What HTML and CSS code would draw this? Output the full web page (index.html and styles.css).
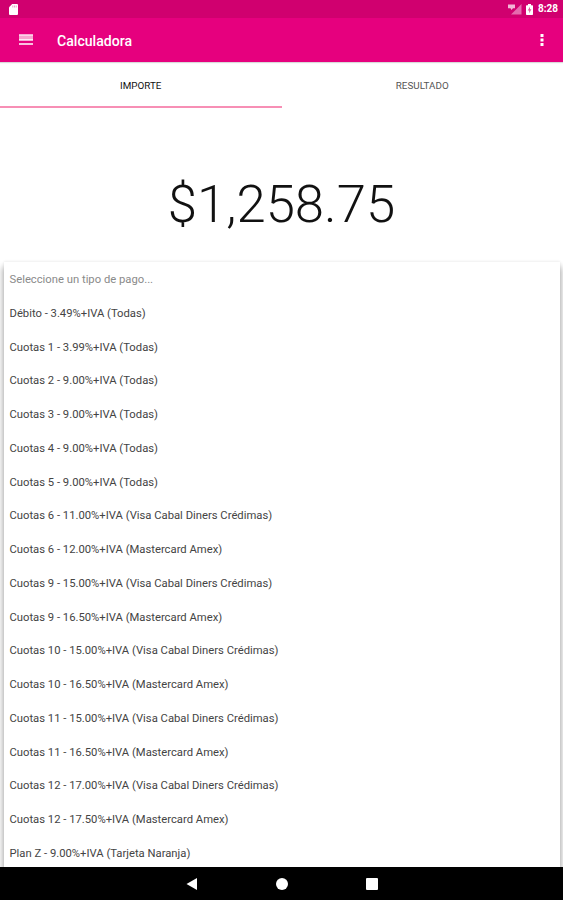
FILE: index.html
```
<!DOCTYPE html>
<html lang="es">
<head>
  <meta charset="UTF-8">
  <meta name="viewport" content="width=device-width, initial-scale=1">
  <title>Calculadora</title>
  <link rel="stylesheet" href="styles.css">
</head>
<body>

<div class="status-bar">
  <svg class="sd-icon" width="9" height="11" viewBox="0 0 9 11">
    <path fill="#fff" d="M3.2 0H8a1 1 0 0 1 1 1v9a1 1 0 0 1-1 1H1a1 1 0 0 1-1-1V3.2z"/>
    <path stroke="#e58abb" stroke-width=".8" d="M3.8 1.5v2M5.5 1.5v2M7.2 1.5v2"/>
  </svg>
  <div class="status-right">
    <svg class="signal-icon" width="14" height="11" viewBox="0 0 14 11">
      <path fill="#e56aae" d="M13.5 0v10.5H3z"/>
      <path fill="#f3b5d6" d="M0 .5h7v3.8H5L3.5 6 2.5 4.3H0z"/>
    </svg>
    <svg class="battery-icon" width="7" height="11" viewBox="0 0 7 11">
      <path fill="#fff" d="M2 0h3v1.2h1.3q.7 0 .7.7v8.4q0 .7-.7.7H.7q-.7 0-.7-.7V1.9q0-.7.7-.7H2z"/>
      <path fill="#e05a9f" d="M4 2.8 1.7 6.500h1.500v2.700l2.200-4H4z"/>
    </svg>
    <span class="clock">8:28</span>
  </div>
</div>

<header class="toolbar">
  <svg class="menu-icon" width="14" height="12" viewBox="0 0 14 12">
    <path fill="#f7a3ce" d="M0 .5h14v6H0z"/>
    <path fill="#fff" d="M0 .5h14v1H0zM0 5.300h14v1.200H0zM0 9.200h14v1.600H0z"/>
  </svg>
  <h1>Calculadora</h1>
  <svg class="more-icon" width="4" height="12" viewBox="0 0 4 12">
    <path fill="#fff" d="M.5 0h3v3h-3zM.5 4.500h3v3h-3zM.5 9h3v3h-3z"/>
  </svg>
</header>

<nav class="tabs">
  <div class="tab active">IMPORTE</div>
  <div class="tab">RESULTADO</div>
</nav>

<main>
  <div class="amount">$1,258.75</div>
  <div class="list-wrap">
    <ul class="payments">
      <li class="hint">Seleccione un tipo de pago...</li>
      <li>Débito - 3.49%+IVA (Todas)</li>
      <li>Cuotas 1 - 3.99%+IVA (Todas)</li>
      <li>Cuotas 2 - 9.00%+IVA (Todas)</li>
      <li>Cuotas 3 - 9.00%+IVA (Todas)</li>
      <li>Cuotas 4 - 9.00%+IVA (Todas)</li>
      <li>Cuotas 5 - 9.00%+IVA (Todas)</li>
      <li>Cuotas 6 - 11.00%+IVA (Visa Cabal Diners Crédimas)</li>
      <li>Cuotas 6 - 12.00%+IVA (Mastercard Amex)</li>
      <li>Cuotas 9 - 15.00%+IVA (Visa Cabal Diners Crédimas)</li>
      <li>Cuotas 9 - 16.50%+IVA (Mastercard Amex)</li>
      <li>Cuotas 10 - 15.00%+IVA (Visa Cabal Diners Crédimas)</li>
      <li>Cuotas 10 - 16.50%+IVA (Mastercard Amex)</li>
      <li>Cuotas 11 - 15.00%+IVA (Visa Cabal Diners Crédimas)</li>
      <li>Cuotas 11 - 16.50%+IVA (Mastercard Amex)</li>
      <li>Cuotas 12 - 17.00%+IVA (Visa Cabal Diners Crédimas)</li>
      <li>Cuotas 12 - 17.50%+IVA (Mastercard Amex)</li>
      <li>Plan Z - 9.00%+IVA (Tarjeta Naranja)</li>
    </ul>
  </div>
</main>

<footer class="nav-bar">
  <svg width="12" height="14" viewBox="0 0 12 14"><path fill="#fff" d="M11 1v12L.5 7z"/></svg>
  <svg width="12" height="14" viewBox="0 0 12 14"><circle cx="6" cy="7" r="6" fill="#fff"/></svg>
  <svg width="12" height="14" viewBox="0 0 12 14"><rect y="1" width="12" height="12" rx="1" fill="#fff"/></svg>
</footer>

</body>
</html>
```
FILE: styles.css
```
* {
  box-sizing: border-box;
}
body {
  font-family: Roboto, "Liberation Sans", sans-serif;
  margin: 0;
  height: 900px;
  display: flex;
  flex-direction: column;
  overflow: hidden;
  background: #fff;
  color: #444;
}
svg {
  display: block;
}
.status-bar {
  height: 18px;
  flex: none;
  display: flex;
  justify-content: space-between;
  align-items: center;
  padding: 0 5px 0 9px;
  background: #d0006f;
  color: #fff;
}
.status-right {
  display: flex;
  align-items: center;
}
.battery-icon {
  margin: 0 5px 0 4px;
}
.clock {
  font-size: 10px;
  font-weight: 700;
  line-height: 18px;
}
.toolbar {
  height: 44px;
  flex: none;
  display: flex;
  align-items: center;
  padding: 0 19px;
  background: #e6007e;
  color: #fff;
  box-shadow: 0 1px 1px rgba(0, 0, 0, 0.15);
}
.toolbar h1 {
  flex: 1;
  margin: 1px 0 0 24px;
  font-size: 14.1px;
  font-weight: 500;
}
.tabs {
  height: 46px;
  flex: none;
  display: flex;
}
.tab {
  flex: 1;
  line-height: 47px;
  font-size: 9.84px;
  text-align: center;
  color: #555;
}
.tab.active {
  color: #111;
  border-bottom: 2px solid #f78fb5;
}
main {
  flex: 1;
  min-height: 0;
  display: flex;
  flex-direction: column;
}
.amount {
  height: 154px;
  flex: none;
  padding-top: 65px;
  font-size: 52.7px;
  font-weight: 300;
  line-height: 62px;
  text-align: center;
  color: #111;
}
.list-wrap {
  flex: 1;
  min-height: 0;
  padding: 0 3px 0 4px;
}
.payments {
  list-style: none;
  height: 100%;
  margin: 0;
  padding: 0 5.5px;
  overflow: hidden;
  background: #fff;
  box-shadow: 0 7px 6px 2px rgba(0, 0, 0, 0.25), 0 0 3px rgba(0, 0, 0, 0.1);
}
.payments li {
  height: 33.75px;
  line-height: 35px;
  font-size: 11.25px;
}
.payments .hint {
  color: #8a8a8a;
}
.nav-bar {
  position: relative;
  height: 33px;
  flex: none;
  display: flex;
  justify-content: center;
  align-items: center;
  gap: 78px;
  background: #000;
}
```
